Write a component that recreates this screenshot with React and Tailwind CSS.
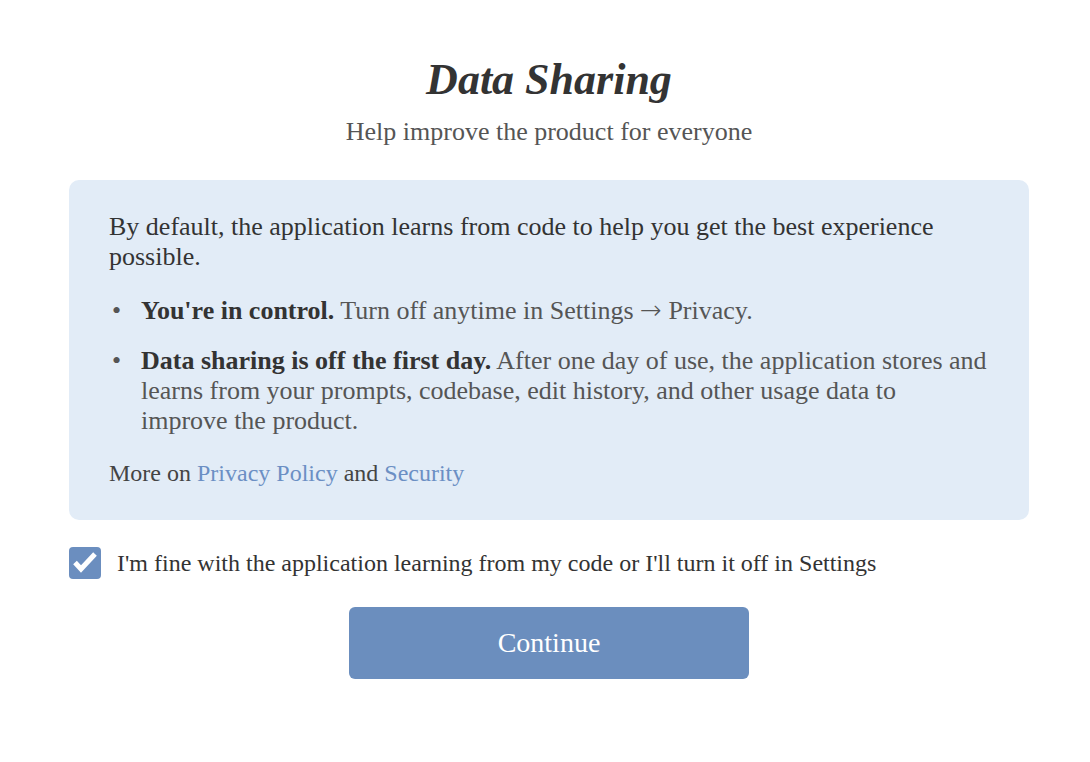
export default function App() {
  return (
    <div className="min-h-screen bg-white font-['Liberation_Serif',serif] text-[#333]">
      <div className="ml-[69px] w-[960px] pt-[52px]">
        <h1 className="text-center text-[44px] leading-[56px] font-bold italic text-[#333]">Data Sharing</h1>
        <p className="mt-[8px] text-center text-[26px] leading-[32px] text-[#555]">Help improve the product for everyone</p>

        <div className="mt-[32px] rounded-[10px] bg-[#e2ecf7] px-[40px] pt-[32px] pb-[32px] text-[26px] leading-[30px]">
          <p className="text-[#333]">
            By default, the application learns from code to help you get the best experience possible.
          </p>
          <ul className="mt-[24px] flex flex-col gap-[20px] text-[#555]">
            <li className="flex">
              <span className="w-[32px] shrink-0 pl-[3px]">•</span>
              <span>
                <b className="text-[#333]">You're in control.</b> Turn off anytime in Settings{" "}
                <span className="font-['DejaVu_Sans',sans-serif] text-[26px] leading-none font-light">→</span> Privacy.
              </span>
            </li>
            <li className="flex">
              <span className="w-[32px] shrink-0 pl-[3px]">•</span>
              <span>
                <b className="text-[#333]">Data sharing is off the first day.</b> After one day of use, the application stores and learns from your prompts, codebase, edit history, and other usage data to improve the product.
              </span>
            </li>
          </ul>
          <p className="mt-[22px] text-[24px] text-[#444]">
            More on <a className="text-[#6b8fc4]">Privacy Policy</a> and <a className="text-[#6b8fc4]">Security</a>
          </p>
        </div>

        <label className="mt-[27px] flex items-center gap-[16px]">
          <span className="flex h-[32px] w-[32px] shrink-0 rounded-[4px] bg-[#6b8ebf]">
            <svg width="32" height="32" viewBox="0 0 32 32" fill="none" stroke="white" strokeWidth="5" strokeLinecap="butt" strokeLinejoin="miter">
              <path d="M6 15.5l6 6.5L26 7" />
            </svg>
          </span>
          <span className="text-[24px] leading-[30px] text-[#333]">
            I'm fine with the application learning from my code or I'll turn it off in Settings
          </span>
        </label>

        <div className="mt-[28px] flex justify-center">
          <button className="h-[72px] w-[400px] rounded-[6px] bg-[#6b8ebe] text-[28px] text-white">Continue</button>
        </div>
      </div>
    </div>
  );
}
